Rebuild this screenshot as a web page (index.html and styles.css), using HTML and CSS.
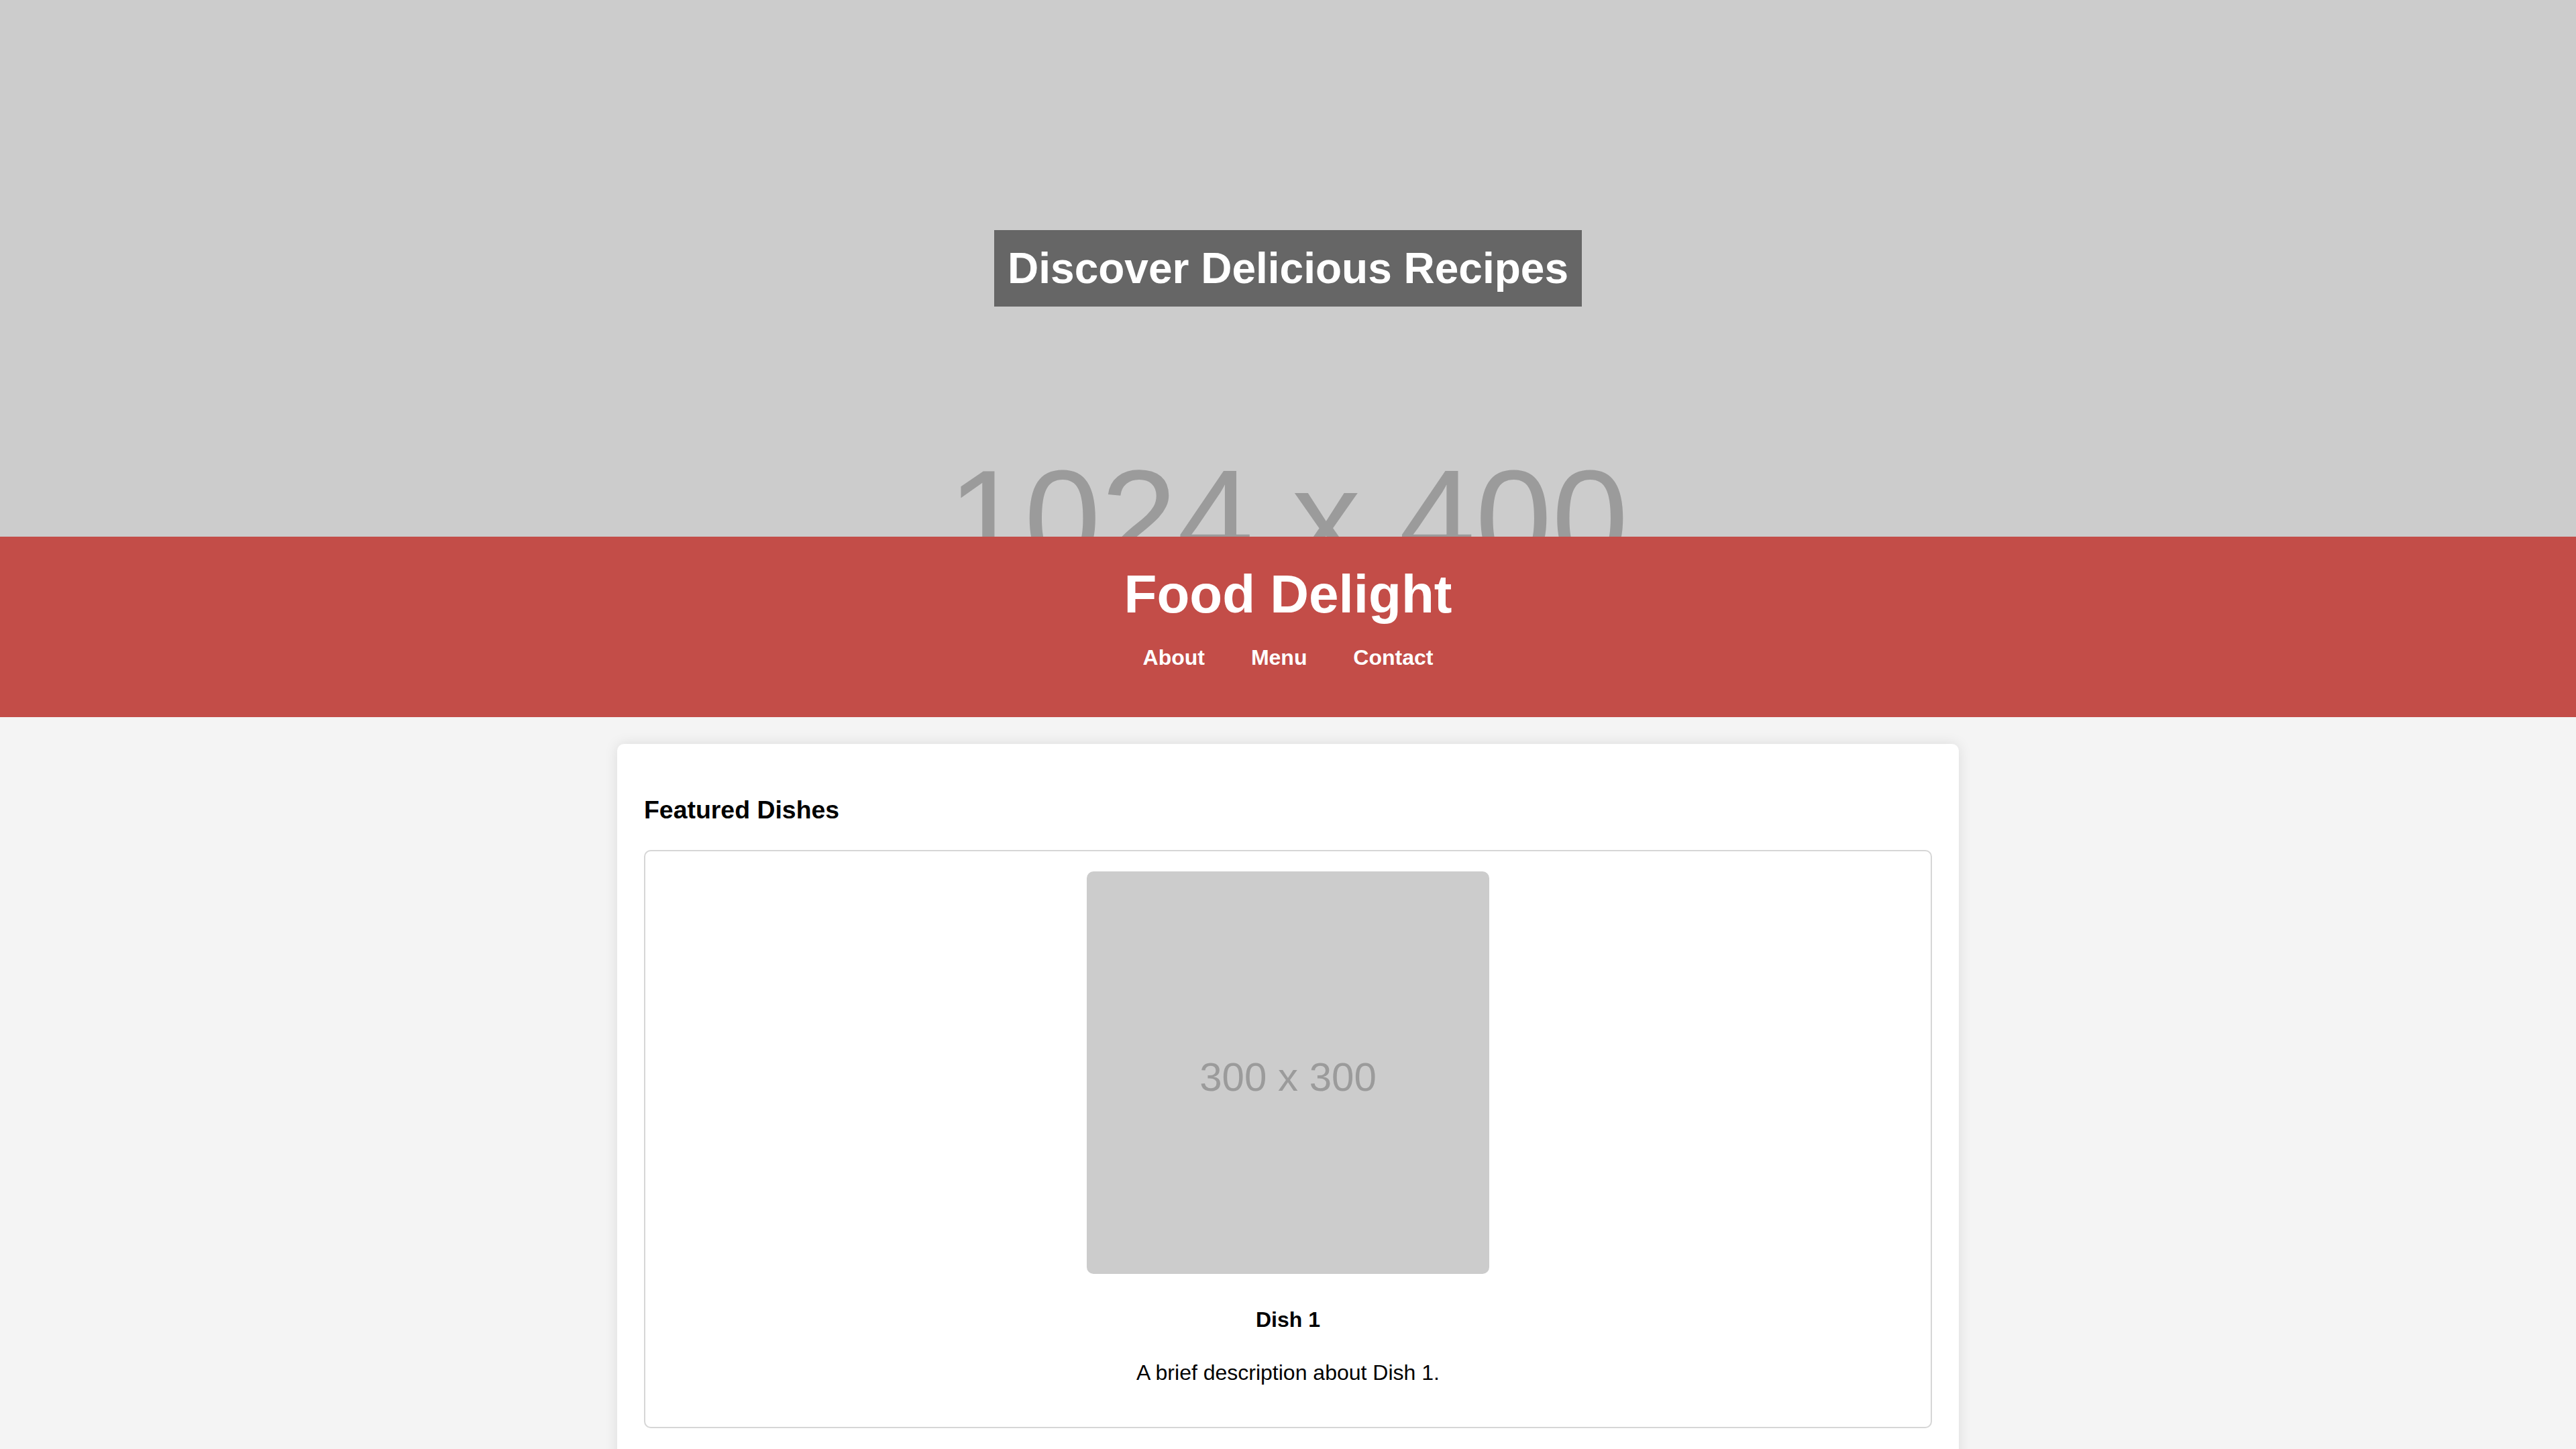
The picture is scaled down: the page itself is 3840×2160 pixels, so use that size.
FILE: index.html
```html
<!DOCTYPE html>
<html lang="en">
<head>
<meta charset="utf-8">
<title>Food Delight</title>
<link rel="stylesheet" href="styles.css">
</head>
<body>
  <section class="hero">
    <span class="hero-placeholder">1024 x 400</span>
    <h2 class="hero-title">Discover Delicious Recipes</h2>
  </section>

  <header class="site-header">
    <h1 class="site-title">Food Delight</h1>
    <nav class="site-nav">
      <ul class="nav-list">
        <li class="nav-item"><a class="nav-link" href="#about">About</a></li>
        <li class="nav-item"><a class="nav-link" href="#menu">Menu</a></li>
        <li class="nav-item"><a class="nav-link" href="#contact">Contact</a></li>
      </ul>
    </nav>
  </header>

  <main class="container">
    <h3 class="section-title">Featured Dishes</h3>
    <div class="dish">
      <div class="dish-img"><span class="dish-img-label">300 x 300</span></div>
      <h4 class="dish-name">Dish 1</h4>
      <p class="dish-desc">A brief description about Dish 1.</p>
    </div>
    <div class="dish">
      <div class="dish-img"><span class="dish-img-label">300 x 300</span></div>
      <h4 class="dish-name">Dish 2</h4>
      <p class="dish-desc">A brief description about Dish 2.</p>
    </div>
    <div class="dish">
      <div class="dish-img"><span class="dish-img-label">300 x 300</span></div>
      <h4 class="dish-name">Dish 3</h4>
      <p class="dish-desc">A brief description about Dish 3.</p>
    </div>
  </main>
</body>
</html>
```

FILE: styles.css
```css
html, body {
  margin: 0;
  padding: 0;
}

body {
  background: #f4f4f4;
  color: #000;
  font-family: "Liberation Sans", Arial, Helvetica, sans-serif;
}

/* Hero */
.hero {
  position: relative;
  height: 800px;
  background: #cccccc;
  overflow: hidden;
  display: flex;
  align-items: center;
  justify-content: center;
}

.hero-placeholder {
  position: absolute;
  left: 0;
  right: 0;
  top: 670px;
  text-align: center;
  font-size: 205px;
  line-height: 204px;
  color: #9b9b9b;
  white-space: nowrap;
}

.hero-title {
  position: relative;
  margin: 0;
  padding: 20px;
  background: rgba(0, 0, 0, 0.5);
  color: #fff;
  font-size: 64px;
  font-weight: bold;
  line-height: normal;
}

/* Header */
.site-header {
  background: #c34d48;
  color: #fff;
  text-align: center;
  padding: 40px 0;
}

.site-title {
  margin: 0;
  font-size: 80px;
  font-weight: bold;
  line-height: normal;
}

.nav-list {
  margin: 30px 0;
  padding: 0;
  list-style: none;
  font-size: 32px;
  line-height: normal;
}

.nav-item {
  display: inline;
}

.nav-link {
  color: #fff;
  text-decoration: none;
  font-weight: bold;
  margin: 0 30px;
}

/* Content card */
.container {
  width: 1920px;
  margin: 40px auto;
  padding: 40px;
  background: #fff;
  border-radius: 10px;
  box-shadow: 0 0 20px rgba(0, 0, 0, 0.1);
}

.section-title {
  margin: 37.44px 0;
  font-size: 37.44px;
  font-weight: bold;
  line-height: normal;
}

.dish {
  border: 2px solid #d6d6d6;
  border-radius: 10px;
  padding: 30px;
  margin-bottom: 40px;
  text-align: center;
}

.dish-img {
  width: 600px;
  height: 600px;
  margin: 0 auto;
  background: #cccccc;
  border-radius: 10px;
  display: flex;
  align-items: center;
  justify-content: center;
}

.dish-img-label {
  margin-top: 14px;
  color: #9b9b9b;
  font-size: 60px;
}

.dish-name {
  margin: 50px 0 42.56px;
  font-size: 32px;
  font-weight: bold;
  line-height: normal;
}

.dish-desc {
  margin: 32px 0;
  font-size: 32px;
  line-height: normal;
}
```
